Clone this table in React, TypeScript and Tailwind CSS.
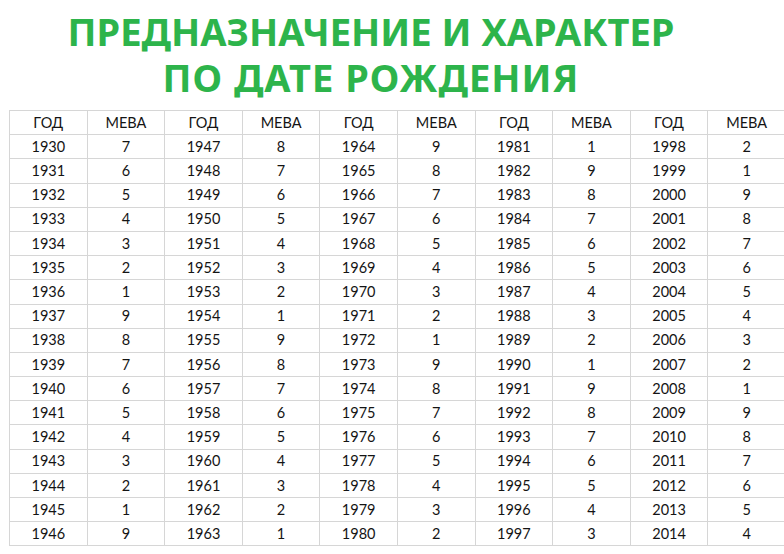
import React from "react";

const meva = (y: number) => {
  const m = (((7 - (y - 1930)) % 9) + 9) % 9;
  return m === 0 ? 9 : m;
};

const starts = [1930, 1947, 1964, 1981, 1998];

export default function App() {
  const rows = Array.from({ length: 17 }, (_, i) => i);
  return (
    <div className="w-[784px] h-[554px] bg-white overflow-hidden relative">
      <div
        className="w-[742px] pt-[9px] text-center text-[#2db44b] font-bold text-[38px] leading-[45px]"
        style={{ fontFamily: '"Noto Sans", sans-serif' }}
      >
        <div>ПРЕДНАЗНАЧЕНИЕ И ХАРАКТЕР</div>
        <div className="tracking-[1px] pt-[1px]">ПО ДАТЕ РОЖДЕНИЯ</div>
      </div>
      <div className="absolute left-[9px] top-[110px]">
        <table
          className="table-fixed border-collapse text-[#141414] text-[14.5px]"
          style={{ fontFamily: "Lato, sans-serif", width: 776 }}
        >
          <tbody>
            <tr className="h-[24.2px]">
              {starts.map((s) => (
                <React.Fragment key={s}>
                  <td className="border border-[#d6d6d6] text-center p-0 w-[77.6px]">ГОД</td>
                  <td className="border border-[#d6d6d6] text-center p-0 w-[77.6px]">МЕВА</td>
                </React.Fragment>
              ))}
            </tr>
            {rows.map((i) => (
              <tr key={i} className="h-[24.2px]">
                {starts.map((s) => (
                  <React.Fragment key={s}>
                    <td className="border border-[#d6d6d6] text-center p-0">{s + i}</td>
                    <td className="border border-[#d6d6d6] text-center p-0">{meva(s + i)}</td>
                  </React.Fragment>
                ))}
              </tr>
            ))}
          </tbody>
        </table>
      </div>
    </div>
  );
}
